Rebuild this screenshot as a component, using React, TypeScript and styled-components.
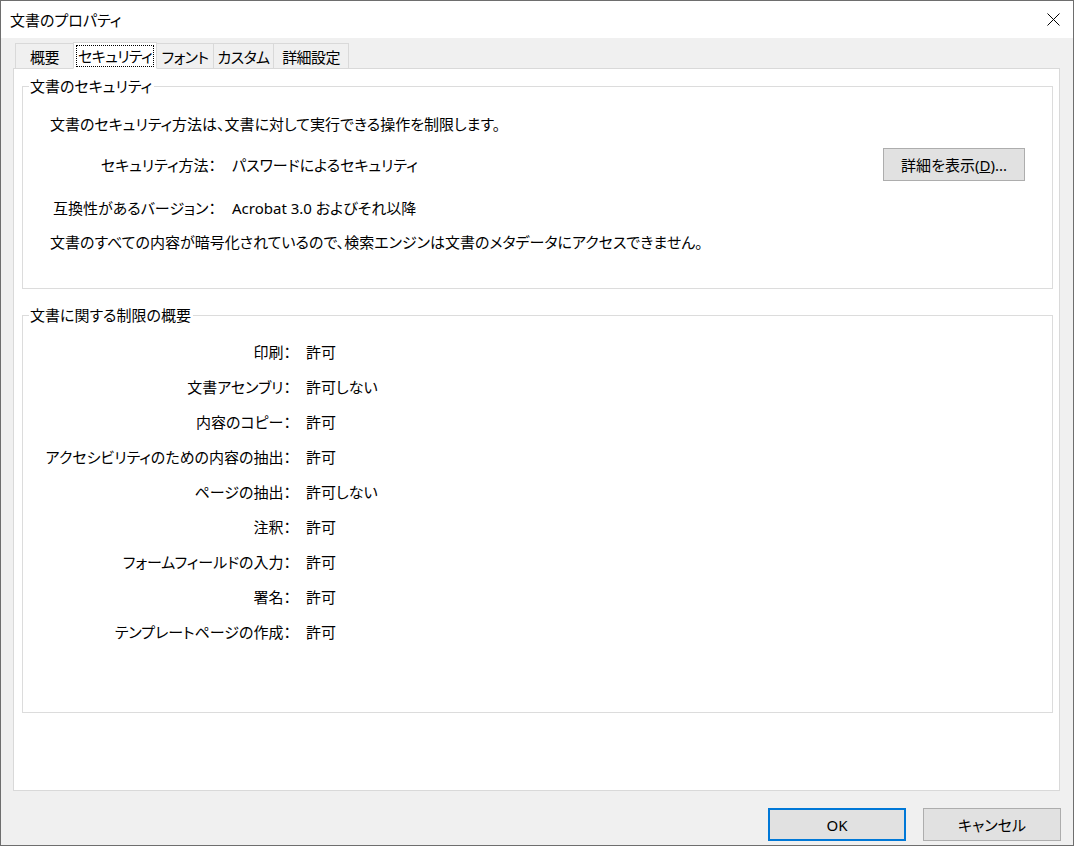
import React from 'react';
import styled, { createGlobalStyle } from 'styled-components';

const GlobalStyle = createGlobalStyle`
  html, body {
    margin: 0;
    padding: 0;
    background: #ffffff;
  }
  body {
    font-family: 'Noto Sans', 'Noto Sans CJK JP', sans-serif;
    font-size: 15px;
    color: #000000;
    font-feature-settings: 'palt';
  }
`;

const Window = styled.div`
  box-sizing: border-box;
  width: 1074px;
  height: 846px;
  border: 1px solid #6e6e6e;
  display: flex;
  flex-direction: column;
  background: #f0f0f0;
`;

const TitleBar = styled.div`
  height: 37px;
  flex: none;
  display: flex;
  align-items: center;
  justify-content: space-between;
  padding: 0 13px 0 9px;
  background: #ffffff;
  line-height: 20px;
`;

const CloseButton = styled.button`
  border: 0;
  padding: 0;
  background: transparent;
  width: 13px;
  height: 13px;
  display: flex;
  cursor: default;
`;

const TabStrip = styled.div`
  flex: none;
  display: flex;
  align-items: flex-end;
  padding: 4px 0 0 14px;
  margin-bottom: -1px;
  position: relative;
  z-index: 1;
`;

const Tab = styled.div<{ w: number; active?: boolean }>`
  box-sizing: border-box;
  width: ${({ w }) => w}px;
  height: ${({ active }) => (active ? 27 : 26)}px;
  margin-left: -1px;
  padding: ${({ active }) => (active ? '2px 2px 1px 2px' : '2px 0 0 0')};
  border: 1px solid #d9d9d9;
  border-bottom-color: ${({ active }) => (active ? 'transparent' : '#d9d9d9')};
  background: ${({ active }) => (active ? '#ffffff' : '#f0f0f0')};
  position: relative;
  z-index: ${({ active }) => (active ? 2 : 1)};
  display: flex;
  align-items: center;
  justify-content: center;
  line-height: 20px;
  letter-spacing: -0.6px;
  white-space: nowrap;

  &:first-child {
    margin-left: 0;
  }
`;

const FocusRing = styled.span`
  flex: 1;
  align-self: stretch;
  display: flex;
  align-items: center;
  justify-content: center;
  border: 1px dotted #000000;
`;

const Panel = styled.div`
  box-sizing: border-box;
  height: 723px;
  flex: none;
  margin: 0 13px 0 12px;
  padding: 7px 6px 0 8px;
  background: #ffffff;
  border: 1px solid #d9d9d9;
  display: flex;
  flex-direction: column;
  gap: 16px;
`;

const Group = styled.fieldset<{ bottom: number }>`
  margin: 0;
  padding: 0 27px ${({ bottom }) => bottom}px 27px;
  border: 1px solid #dcdcdc;
  min-width: 0;
`;

const Legend = styled.legend`
  margin-left: -21px;
  padding: 0 2px 0 1px;
  line-height: 20px;
`;

const SecurityBody = styled.div`
  display: flex;
  flex-direction: column;
  padding-top: 18px;
`;

const Line = styled.div<{ top?: number }>`
  line-height: 20px;
  margin-top: ${({ top }) => top ?? 0}px;
  white-space: nowrap;
`;

const InfoRow = styled.div<{ top?: number }>`
  display: flex;
  align-items: center;
  margin-top: ${({ top }) => top ?? 0}px;
  min-height: 20px;
  line-height: 20px;
`;

const InfoLabel = styled.span`
  width: 166px;
  flex: none;
  text-align: right;
  white-space: nowrap;
`;

const InfoValue = styled.span`
  flex: 1;
  padding-left: 16px;
  white-space: nowrap;
`;

const Button = styled.button<{ w: number; primary?: boolean }>`
  box-sizing: border-box;
  width: ${({ w }) => w}px;
  height: 33px;
  margin: 0;
  padding: 0;
  font: inherit;
  color: #000000;
  background: #e1e1e1;
  border: ${({ primary }) => (primary ? '2px solid #0078d7' : '1px solid #adadad')};
  line-height: 20px;
  cursor: default;
`;

const Grid = styled.div`
  display: grid;
  grid-template-columns: 268px auto;
  grid-auto-rows: 35px;
  align-items: center;
  padding-top: 9px;
  margin-left: -27px;
`;

const GridLabel = styled.span`
  text-align: right;
  white-space: nowrap;
  line-height: 20px;
`;

const GridValue = styled.span`
  padding-left: 15px;
  white-space: nowrap;
  line-height: 20px;
`;

const Footer = styled.div`
  flex: 1;
  display: flex;
  justify-content: flex-end;
  align-items: flex-start;
  gap: 17px;
  padding: 17px 12px 0 0;
`;

const tabs = [
  { name: '概要', w: 59 },
  { name: 'セキュリティ', w: 84, active: true },
  { name: 'フォント', w: 58 },
  { name: 'カスタム', w: 61 },
  { name: '詳細設定', w: 76 },
];

const restrictions: [string, string][] = [
  ['印刷', '許可'],
  ['文書アセンブリ', '許可しない'],
  ['内容のコピー', '許可'],
  ['アクセシビリティのための内容の抽出', '許可'],
  ['ページの抽出', '許可しない'],
  ['注釈', '許可'],
  ['フォームフィールドの入力', '許可'],
  ['署名', '許可'],
  ['テンプレートページの作成', '許可'],
];

export default function App() {
  return (
    <>
      <GlobalStyle />
      <Window>
        <TitleBar>
          <span>文書のプロパティ</span>
          <CloseButton aria-label="閉じる">
            <svg width="13" height="13" viewBox="0 0 13 13">
              <path d="M0.5 0.5 L12.5 12.5 M12.5 0.5 L0.5 12.5" stroke="#000" strokeWidth="1" fill="none" />
            </svg>
          </CloseButton>
        </TitleBar>

        <TabStrip>
          {tabs.map(t => (
            <Tab key={t.name} w={t.w} active={t.active}>
              {t.active ? <FocusRing>{t.name}</FocusRing> : t.name}
            </Tab>
          ))}
        </TabStrip>

        <Panel>
          <Group bottom={36}>
            <Legend>文書のセキュリティ</Legend>
            <SecurityBody>
              <Line>文書のセキュリティ方法は、文書に対して実行できる操作を制限します。</Line>
              <InfoRow top={14}>
                <InfoLabel>セキュリティ方法：</InfoLabel>
                <InfoValue>パスワードによるセキュリティ</InfoValue>
                <Button w={142}>
                  詳細を表示(<u>D</u>)...
                </Button>
              </InfoRow>
              <InfoRow top={17}>
                <InfoLabel>互換性があるバージョン：</InfoLabel>
                <InfoValue>Acrobat 3.0 およびそれ以降</InfoValue>
              </InfoRow>
              <Line top={14}>
                文書のすべての内容が暗号化されているので、検索エンジンは文書のメタデータにアクセスできません。
              </Line>
            </SecurityBody>
          </Group>

          <Group bottom={63}>
            <Legend>文書に関する制限の概要</Legend>
            <Grid>
              {restrictions.map(([label, value]) => (
                <React.Fragment key={label}>
                  <GridLabel>{label}：</GridLabel>
                  <GridValue>{value}</GridValue>
                </React.Fragment>
              ))}
            </Grid>
          </Group>
        </Panel>

        <Footer>
          <Button w={138} primary>
            OK
          </Button>
          <Button w={138}>キャンセル</Button>
        </Footer>
      </Window>
    </>
  );
}
